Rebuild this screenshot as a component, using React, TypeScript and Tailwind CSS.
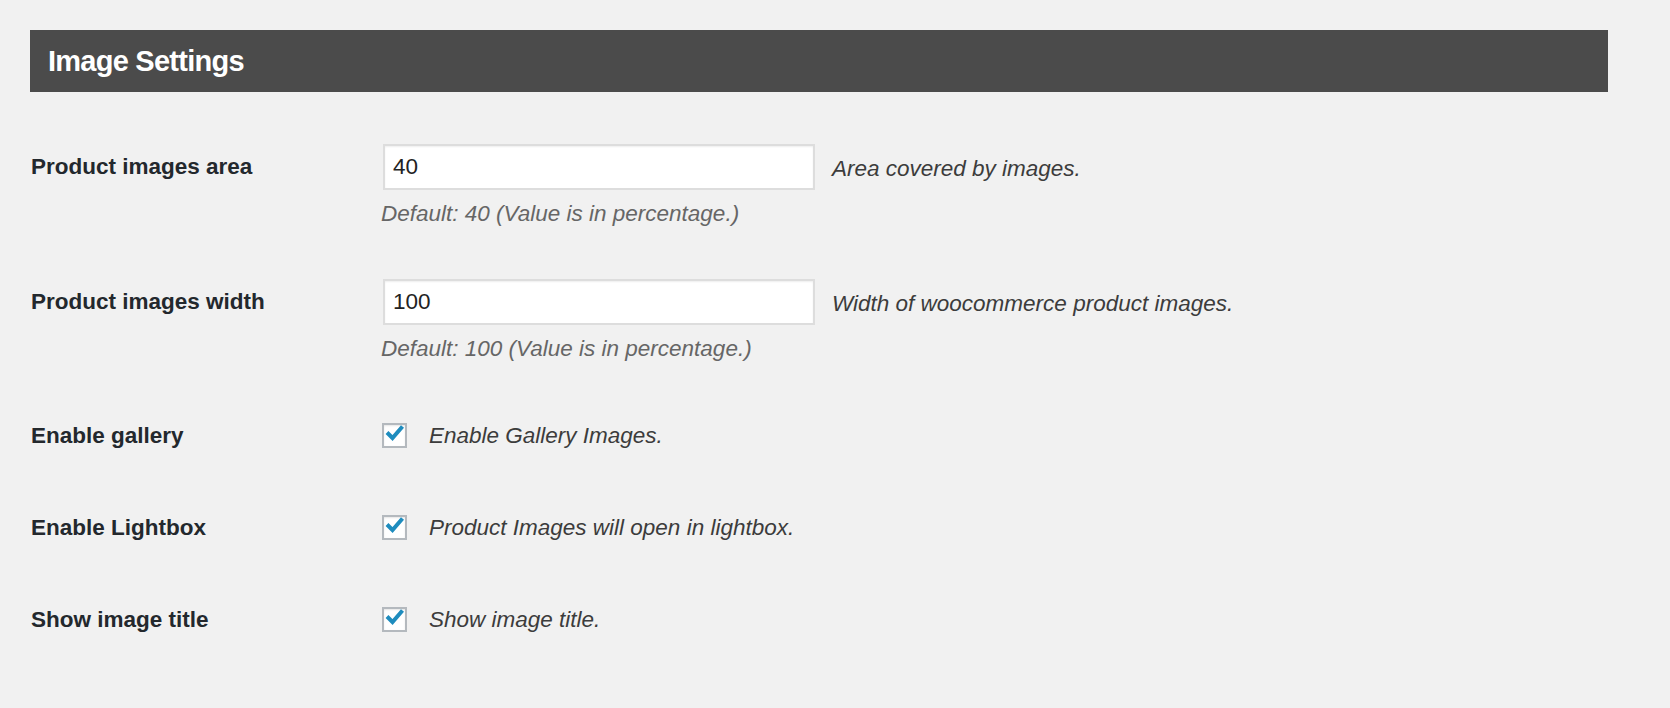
import React from 'react';

function CheckBox() {
  return (
    <span className="flex h-[25px] w-[25px] shrink-0 items-center justify-center border-2 border-[#b4b9be] bg-white shadow-[inset_0_1px_2px_rgba(0,0,0,0.1)]">
      <svg width="21" height="21" viewBox="0 0 21 21" className="-mt-[3px]">
        <path d="M3 8.5 L8.5 14 L18.5 2.5" fill="none" stroke="#1e8cbe" strokeWidth="4" />
      </svg>
    </span>
  );
}

function TextRow({ label, value, desc, hint }: { label: string; value: string; desc: string; hint: string }) {
  return (
    <div className="flex">
      <div className="flex h-[46px] w-[353px] shrink-0 items-center pl-px text-[22.5px] font-bold text-[#23282d]">
        {label}
      </div>
      <div className="flex flex-col">
        <div className="flex items-center">
          <div className="flex h-[46px] w-[432px] items-center border-2 border-[#dddddd] bg-white pl-[8px] text-[22.5px] text-[#222] shadow-[inset_0_1px_2px_rgba(0,0,0,0.07)]">
            {value}
          </div>
          <span className="ml-[17px] pt-[3px] text-[22.5px] italic text-[#3c3c3c]">{desc}</span>
        </div>
        <p className="mt-[8px] -ml-[2px] text-[22.5px] leading-[32px] italic text-[#666]">{hint}</p>
      </div>
    </div>
  );
}

function CheckRow({ label, desc }: { label: string; desc: string }) {
  return (
    <div className="flex h-[25px] items-center">
      <div className="w-[352px] shrink-0 pl-px text-[22.5px] font-bold text-[#23282d]">{label}</div>
      <CheckBox />
      <span className="ml-[22px] text-[22.5px] italic text-[#3c3c3c]">{desc}</span>
    </div>
  );
}

export default function App() {
  return (
    <div className="min-h-screen bg-[#f1f1f1] pl-[30px] pr-[62px] pt-[30px] font-['Liberation_Sans',Arial,sans-serif]">
      <div className="flex h-[62px] items-center bg-[#4b4b4b] pl-[18px]">
        <h2 className="pt-[1px] text-[29px] font-bold tracking-[-0.75px] text-white">Image Settings</h2>
      </div>

      <div className="mt-[52px]">
        <TextRow
          label="Product images area"
          value="40"
          desc="Area covered by images."
          hint="Default: 40 (Value is in percentage.)"
        />
      </div>
      <div className="mt-[49px]">
        <TextRow
          label="Product images width"
          value="100"
          desc="Width of woocommerce product images."
          hint="Default: 100 (Value is in percentage.)"
        />
      </div>

      <div className="mt-[58px] flex flex-col gap-[67px]">
        <CheckRow label="Enable gallery" desc="Enable Gallery Images." />
        <CheckRow label="Enable Lightbox" desc="Product Images will open in lightbox." />
        <CheckRow label="Show image title" desc="Show image title." />
      </div>
    </div>
  );
}
